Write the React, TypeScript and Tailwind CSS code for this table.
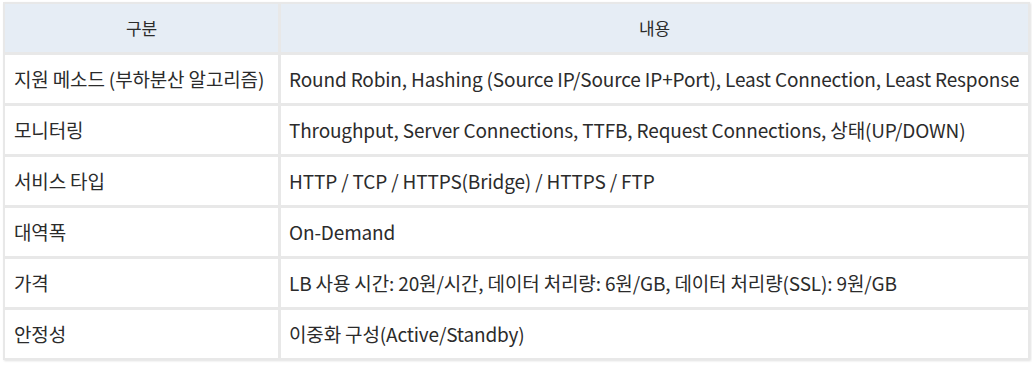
import React from "react";

const rows: [string, string][] = [
  ["지원 메소드 (부하분산 알고리즘)", "Round Robin, Hashing (Source IP/Source IP+Port), Least Connection, Least Response"],
  ["모니터링", "Throughput, Server Connections, TTFB, Request Connections, 상태(UP/DOWN)"],
  ["서비스 타입", "HTTP / TCP / HTTPS(Bridge) / HTTPS / FTP"],
  ["대역폭", "On-Demand"],
  ["가격", "LB 사용 시간: 20원/시간, 데이터 처리량: 6원/GB, 데이터 처리량(SSL): 9원/GB"],
  ["안정성", "이중화 구성(Active/Standby)"],
];

export default function App() {
  return (
    <div
      className="w-[1032px] h-[366px] bg-white pt-[2px] pl-[3px]"
      style={{ fontFamily: '"Noto Sans CJK KR", "Noto Sans", sans-serif' }}
    >
      <div className="w-[1027px] bg-[#e8e8e8] p-[2px] shadow-[1px_1px_2px_rgba(0,0,0,0.12)]">
        <div className="grid grid-cols-[273px_1fr] gap-[3px] text-[#2b2b2b] text-[19px] tracking-[-0.15px]">
          <div className="h-[48px] bg-[#e6edf5] flex items-center justify-center text-[17px]">구분</div>
          <div className="h-[48px] bg-[#e6edf5] flex items-center justify-center text-[17px]">내용</div>
          {rows.map(([a, b]) => (
            <React.Fragment key={a}>
              <div className="h-[48px] bg-white flex items-center pl-[9px]">{a}</div>
              <div className="h-[48px] bg-white flex items-center pl-[8px]">{b}</div>
            </React.Fragment>
          ))}
        </div>
      </div>
    </div>
  );
}
